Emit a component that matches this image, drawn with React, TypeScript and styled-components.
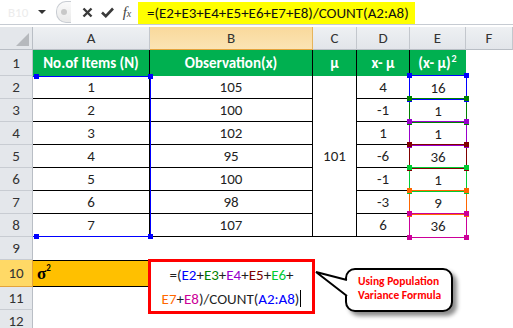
import React from "react";
import styled, { createGlobalStyle } from "styled-components";

const GlobalStyle = createGlobalStyle`
  body {
    margin: 0;
    background: #fff;
    font-family: Carlito, Lato, "Liberation Sans", sans-serif;
  }
`;

const FONT = `Carlito, Lato, "Liberation Sans", sans-serif`;

const Page = styled.div`
  position: relative;
  width: 513px;
  height: 328px;
  overflow: hidden;
  background: #fff;
`;

/* ---------- formula bar ---------- */

const FormulaBar = styled.div`
  display: flex;
  align-items: center;
  height: 24px;
  border-bottom: 1px solid #c6cbd2;
  margin-bottom: 2px;
  background: #fff;
`;

const NameBox = styled.div`
  display: flex;
  align-items: center;
  justify-content: space-between;
  width: 50px;
  padding: 0 4px 0 8px;
  box-sizing: border-box;
  font-size: 13px;
  color: #ececec;
`;

const DropArrow = styled.span`
  width: 0;
  height: 0;
  border-left: 4px solid transparent;
  border-right: 4px solid transparent;
  border-top: 4px solid #333;
`;

const Splitter = styled.div`
  display: flex;
  align-items: center;
  justify-content: center;
  width: 14px;
  height: 20px;
  margin-left: 6px;
  border: 1px solid #c9cdd3;
  border-right: none;
  border-radius: 10px 0 0 10px;
  background: linear-gradient(#fafafa, #e9e9e9);
`;

const SplitDot = styled.span`
  width: 6px;
  height: 6px;
  border-radius: 50%;
  background: #c8c8c8;
`;

const IconSlot = styled.div<{ $gap?: number }>`
  display: flex;
  align-items: center;
  justify-content: center;
  width: 20px;
  height: 20px;
  margin-left: ${(p) => p.$gap ?? 0}px;
  color: #444;
`;

const Fx = styled.span`
  font-family: "Liberation Serif", serif;
  font-style: italic;
  font-size: 15px;
  color: #444;
  & small {
    font-size: 10px;
  }
`;

const FormulaInput = styled.div`
  flex: 1;
  display: flex;
  align-items: stretch;
  height: 100%;
  margin-left: 1px;
`;

const Highlight = styled.div`
  display: flex;
  align-items: center;
  margin-top: 2px;
  padding: 0 6px 0 9px;
  background: #ffff00;
  font-family: ${FONT};
  font-size: 15px;
  color: #111;
`;

/* ---------- sheet ---------- */

const Sheet = styled.div`
  display: grid;
  grid-template-columns: 33px 117px 163px 44px 53px 56px 1fr;
  grid-template-rows: 23px 26px repeat(8, 23px) 27px 23px 23px;
  font-family: ${FONT};
  font-size: 15px;
`;

const Corner = styled.div`
  position: relative;
  background: #e4e7eb;
  border-right: 1px solid #b9bec5;
  border-bottom: 1px solid #b9bec5;
  &::after {
    content: "";
    position: absolute;
    right: 3px;
    bottom: 3px;
    border-left: 13px solid transparent;
    border-bottom: 13px solid #b6b9bd;
  }
`;

const ColHead = styled.div<{ $active?: boolean }>`
  display: flex;
  align-items: center;
  justify-content: center;
  background: ${(p) =>
    p.$active ? "linear-gradient(#f9d99b, #fbe4b4)" : "linear-gradient(#eef0f3, #e2e5ea)"};
  border-right: 1px solid ${(p) => (p.$active ? "#e6b45c" : "#c3c7cd")};
  border-bottom: 1px solid ${(p) => (p.$active ? "#e3a33b" : "#b9bec5")};
  color: #333;
`;

const RowHead = styled.div<{ $active?: boolean }>`
  display: flex;
  align-items: center;
  justify-content: center;
  background: ${(p) => (p.$active ? "#ffd966" : "#e4e7eb")};
  border-right: 1px solid ${(p) => (p.$active ? "#e3a33b" : "#b9bec5")};
  border-bottom: 1px solid ${(p) => (p.$active ? "#e3a33b" : "#c8ccd2")};
  color: #333;
`;

const HeadCell = styled.div<{ $last?: boolean }>`
  display: flex;
  align-items: center;
  justify-content: center;
  background: #00b050;
  color: #fff;
  font-weight: 700;
  border-right: 1px solid ${(p) => (p.$last ? "#00b050" : "#000")};
  white-space: nowrap;
`;

const Sup = styled.sup`
  font-size: 10px;
  line-height: 0;
  vertical-align: 6px;
  margin-left: 1px;
`;

const Cell = styled.div`
  display: flex;
  align-items: center;
  justify-content: center;
  border-right: 1px solid #000;
  border-bottom: 1px solid #000;
  color: #1f1f1f;
`;

const MergedCell = styled(Cell)`
  grid-row: span 7;
`;

const RangeCell = styled(Cell)<{ $ring: string }>`
  position: relative;
  border: none;
  &::before {
    content: "";
    position: absolute;
    inset: -1px -1px -1px -1px;
    border: 1px solid ${(p) => p.$ring};
    pointer-events: none;
  }
`;

const Handle = styled.span<{ $c: string; $pos: string }>`
  position: absolute;
  width: 5px;
  height: 5px;
  background: ${(p) => p.$c};
  z-index: 2;
  ${(p) => p.$pos}
`;

const Empty = styled.div``;

const SigmaCell = styled.div`
  display: flex;
  align-items: center;
  padding-left: 4px;
  background: #ffc000;
  border-top: 1px solid #000;
  border-bottom: 1px solid #000;
  font-family: "Liberation Serif", serif;
  font-weight: 700;
  font-size: 17px;
  color: #000;
`;

const SigmaSup = styled.sup`
  font-family: ${FONT};
  font-size: 9px;
  line-height: 0;
  vertical-align: 8px;
`;

const FillCell = styled.div`
  background: #ffc000;
  border-top: 1px solid #000;
  border-bottom: 1px solid #000;
`;

/* ---------- overlays ---------- */

const RangeLine = styled.div`
  position: absolute;
  background: #0000ff;
`;

const RangeDot = styled.span`
  position: absolute;
  width: 5px;
  height: 5px;
  background: #0000ff;
`;

const FormulaBox = styled.div`
  position: absolute;
  left: 148px;
  top: 259px;
  width: 167px;
  height: 55px;
  box-sizing: border-box;
  border: 3px solid #ff0000;
  background: #fff;
  display: flex;
  flex-direction: column;
  align-items: center;
  justify-content: center;
  font-family: ${FONT};
  font-size: 15px;
  line-height: 24px;
  color: #1f1f1f;
`;

const Ref = styled.span<{ $c: string }>`
  color: ${(p) => p.$c};
`;

const Caret = styled.span`
  display: inline-block;
  width: 1px;
  height: 17px;
  margin-left: 1px;
  vertical-align: -3px;
  background: #000;
`;

const Callout = styled.div`
  position: absolute;
  left: 345px;
  top: 268px;
  width: 108px;
  height: 44px;
  box-sizing: border-box;
  padding: 4px 0 0 11px;
  border: 2px solid #000;
  border-radius: 10px;
  background: #fff;
  box-shadow: 4px 4px 4px rgba(0, 0, 0, 0.45);
  font-family: ${FONT};
  font-size: 11.5px;
  font-weight: 700;
  line-height: 14px;
  color: #ff0000;
  z-index: 3;
`;

const Pointer = styled.svg`
  position: absolute;
  left: 312px;
  top: 268px;
  z-index: 4;
  overflow: visible;
`;

const ringColors = ["#0000ff", "#008000", "#9900cc", "#800000", "#00cc33", "#ff6600", "#cc0099"];

const rows = [
  { n: 1, x: 105, d: 4, e: 16 },
  { n: 2, x: 100, d: -1, e: 1 },
  { n: 3, x: 102, d: 1, e: 1 },
  { n: 4, x: 95, d: -6, e: 36 },
  { n: 5, x: 100, d: -1, e: 1 },
  { n: 6, x: 98, d: -3, e: 9 },
  { n: 7, x: 107, d: 6, e: 36 },
];

const corners = [
  "left:-3px;top:-3px;",
  "right:-3px;top:-3px;",
  "left:-3px;bottom:-3px;",
  "right:-3px;bottom:-3px;",
];

const App = () => {
  return (
    <Page>
      <GlobalStyle />
      <FormulaBar>
        <NameBox>
          <span>B10</span>
          <DropArrow />
        </NameBox>
        <Splitter>
          <SplitDot />
        </Splitter>
        <IconSlot $gap={6}>
          <svg width="11" height="11" viewBox="0 0 11 11">
            <path d="M1.5 1.5 L9.5 9.5 M9.5 1.5 L1.5 9.5" stroke="#3a3a3a" strokeWidth="2.4" />
          </svg>
        </IconSlot>
        <IconSlot>
          <svg width="13" height="11" viewBox="0 0 13 11">
            <path d="M1 5.5 L4.8 9.2 L12 1.5" stroke="#3a3a3a" strokeWidth="2.6" fill="none" />
          </svg>
        </IconSlot>
        <IconSlot>
          <Fx>
            f<small>x</small>
          </Fx>
        </IconSlot>
        <FormulaInput>
          <Highlight>=(E2+E3+E4+E5+E6+E7+E8)/COUNT(A2:A8)</Highlight>
        </FormulaInput>
      </FormulaBar>

      <Sheet>
        <Corner />
        <ColHead>A</ColHead>
        <ColHead $active>B</ColHead>
        <ColHead>C</ColHead>
        <ColHead>D</ColHead>
        <ColHead>E</ColHead>
        <ColHead>F</ColHead>

        <RowHead>1</RowHead>
        <HeadCell>No.of Items (N)</HeadCell>
        <HeadCell>Observation(x)</HeadCell>
        <HeadCell>µ</HeadCell>
        <HeadCell>x- µ</HeadCell>
        <HeadCell $last>
          <span>
            (x- µ)<Sup>2</Sup>
          </span>
        </HeadCell>
        <Empty />

        {rows.map((r, i) => (
          <React.Fragment key={r.n}>
            <RowHead>{i + 2}</RowHead>
            <Cell>{r.n}</Cell>
            <Cell>{r.x}</Cell>
            {i === 0 && <MergedCell>101</MergedCell>}
            <Cell>{r.d}</Cell>
            <RangeCell $ring={ringColors[i]}>
              {r.e}
              {corners.map((c) => (
                <Handle key={c} $c={ringColors[i]} $pos={c} />
              ))}
            </RangeCell>
            <Empty />
          </React.Fragment>
        ))}

        <RowHead>9</RowHead>
        <Empty />
        <Empty />
        <Empty />
        <Empty />
        <Empty />
        <Empty />

        <RowHead $active>10</RowHead>
        <SigmaCell>
          <span>
            σ<SigmaSup>2</SigmaSup>
          </span>
        </SigmaCell>
        <FillCell />
        <Empty />
        <Empty />
        <Empty />
        <Empty />

        <RowHead>11</RowHead>
        <Empty />
        <Empty />
        <Empty />
        <Empty />
        <Empty />
        <Empty />

        <RowHead>12</RowHead>
        <Empty />
        <Empty />
        <Empty />
        <Empty />
        <Empty />
        <Empty />
      </Sheet>

      {/* A2:A8 range outline */}
      <RangeLine style={{ left: 33, top: 76, width: 118, height: 1 }} />
      <RangeLine style={{ left: 150, top: 76, width: 1, height: 161 }} />
      <RangeLine style={{ left: 33, top: 236, width: 118, height: 1 }} />
      <RangeDot style={{ left: 34, top: 74 }} />
      <RangeDot style={{ left: 148, top: 74 }} />
      <RangeDot style={{ left: 34, top: 234 }} />
      <RangeDot style={{ left: 148, top: 234 }} />

      <FormulaBox>
        <div>
          =(<Ref $c="#0000ff">E2</Ref>+<Ref $c="#008000">E3</Ref>+<Ref $c="#9900cc">E4</Ref>+
          <Ref $c="#800000">E5</Ref>+<Ref $c="#00cc33">E6</Ref>+
        </div>
        <div>
          <Ref $c="#ff6600">E7</Ref>+<Ref $c="#cc0099">E8</Ref>)/COUNT(<Ref $c="#0000ff">A2:A8</Ref>)
          <Caret />
        </div>
      </FormulaBox>

      <Pointer width="40" height="30">
        <path d="M35 12 L4 4 L35 28" fill="#fff" stroke="#000" strokeWidth="2" strokeLinejoin="miter" />
      </Pointer>
      <Callout>
        Using Population
        <br />
        Variance Formula
      </Callout>
    </Page>
  );
};

export default App;
